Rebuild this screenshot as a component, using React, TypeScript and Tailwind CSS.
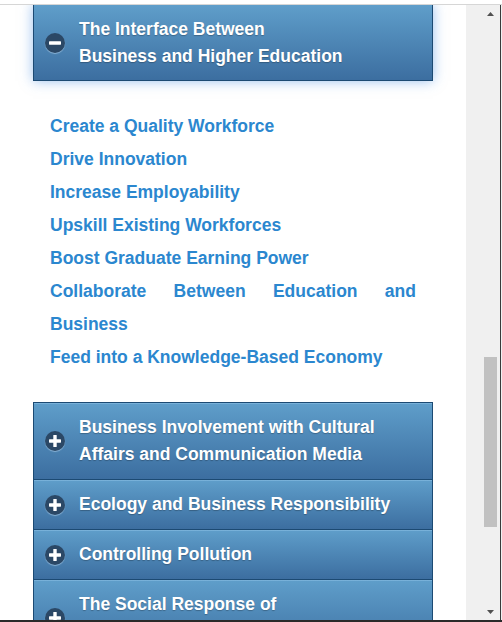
import { FC } from 'react';

const benefits = [
  'Create a Quality Workforce',
  'Drive Innovation',
  'Increase Employability',
  'Upskill Existing Workforces',
  'Boost Graduate Earning Power',
  'Collaborate Between Education and Business',
  'Feed into a Knowledge-Based Economy',
];

const sections = [
  ['Business Involvement with Cultural', 'Affairs and Communication Media'],
  ['Ecology and Business Responsibility'],
  ['Controlling Pollution'],
  ['The Social Response of', 'Business to Urban Problems'],
];

const ToggleIcon: FC<{ open?: boolean }> = ({ open }) => (
  <div className="w-[20px] h-[20px] shrink-0 rounded-full bg-[#2b4866] shadow-[0_1px_1px_rgba(190,220,245,0.55)] flex items-center justify-center">
    <svg width="12" height="12" viewBox="0 0 12 12">
      <rect x="0" y="4.3" width="12" height="3.4" rx="0.6" fill="#fff" />
      {!open && <rect x="4.3" y="0" width="3.4" height="12" rx="0.6" fill="#fff" />}
    </svg>
  </div>
);

const PanelTitle: FC<{ lines: string[] }> = ({ lines }) => (
  <div className="text-white font-bold text-[17.5px] leading-[27px] [text-shadow:0_1px_1px_rgba(0,0,0,0.25)]">
    {lines.map((l) => (
      <div key={l} className="whitespace-nowrap">{l}</div>
    ))}
  </div>
);

const App: FC = () => {
  return (
    <div className="w-[502px] h-[622px] overflow-hidden flex flex-col bg-white font-['Liberation_Sans',Arial,sans-serif]">
      <div className="h-[4px] shrink-0 bg-white" />
      <div className="h-px shrink-0 bg-[#d6d6d6]" />
      <div className="flex flex-1 min-h-0">
        <div className="w-[466px] overflow-hidden">
          <div className="-mt-px">
            {/* open panel */}
            <div className="ml-[33px] w-[400px] border border-[#1c4a73] bg-gradient-to-b from-[#5f9eca] to-[#3c6ea0] shadow-[0_0_12px_rgba(70,140,225,0.55)] pt-[11px] pb-[10px] pl-[11px] flex items-center gap-[14px]">
              <ToggleIcon open />
              <PanelTitle lines={['The Interface Between', 'Business and Higher Education']} />
            </div>

            <ul className="ml-[50px] w-[366px] mt-[29px] text-[17.5px] leading-[33px] font-bold text-[#2b87cf]">
              {benefits.map((b) => (
                <li key={b} className="text-justify">{b}</li>
              ))}
            </ul>

            {/* collapsed panels */}
            <div className="ml-[33px] w-[400px] mt-[28px] border-x border-[#1c4a73]">
              {sections.map((s, i) => (
                <div
                  key={i}
                  className="border-t border-[#1c4a73] bg-gradient-to-b from-[#5f9eca] to-[#3c6ea0] shadow-[inset_0_1px_0_rgba(150,200,235,0.45)] pt-[11px] pb-[11px] pl-[11px] flex items-center gap-[14px]"
                >
                  <ToggleIcon />
                  <PanelTitle lines={s} />
                </div>
              ))}
            </div>
          </div>
        </div>

        {/* scrollbar */}
        <div className="w-[34px] bg-[#f0f0f0] flex flex-col items-end pr-[2px]">
          <div className="w-[15px] h-[17px] flex items-center justify-center">
            <svg width="7" height="4" viewBox="0 0 7 4"><path d="M0 4 L3.5 0 L7 4 Z" fill="#505050" /></svg>
          </div>
          <div className="flex-1 w-[15px] flex flex-col">
            <div className="h-[335px]" />
            <div className="h-[170px] w-[13px] mx-auto bg-[#c1c1c1]" />
            <div className="flex-1" />
          </div>
          <div className="w-[15px] h-[17px] flex items-center justify-center">
            <svg width="7" height="4" viewBox="0 0 7 4"><path d="M0 0 L7 0 L3.5 4 Z" fill="#505050" /></svg>
          </div>
        </div>
        <div className="w-px bg-[#3a3a3a]" />
        <div className="w-px bg-[#f0f0f0]" />
      </div>
      <div className="h-[2px] shrink-0 bg-[#2a2a2a]" />
    </div>
  );
};

export default App;
